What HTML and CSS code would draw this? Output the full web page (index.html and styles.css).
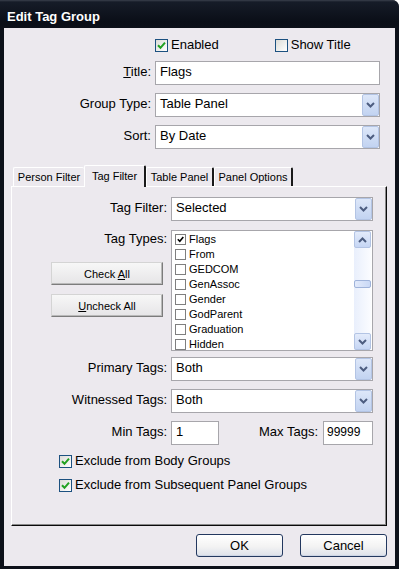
FILE: index.html
```html
<!DOCTYPE html>
<html lang="en">
<head>
    <meta charset="UTF-8">
    <title>Edit Tag Group</title>
    <link rel="stylesheet" href="styles.css">
</head>
<body>
    <div class="window">
        <div class="titlebar">Edit Tag Group</div>
        <div class="client">
            <!-- Üst form -->
            <div class="form">
                <span></span>
                <div class="checks">
                    <label class="check"><span class="box"><svg width="9" height="9" viewBox="0 0 9 9"><path d="M1 4.2l2.5 2.6L8 1.6" fill="none" stroke="#21a121" stroke-width="2"/></svg></span>Enabled</label>
                    <label class="check show-title"><span class="box"></span>Show Title</label>
                </div>
                <span class="lbl"><u>T</u>itle:</span>
                <div class="input">Flags</div>
                <span class="lbl">Group Type:</span>
                <div class="select">Table Panel<span class="drop"><svg width="9" height="6" viewBox="0 0 9 6"><path d="M1 1l3.5 3.5L8 1" fill="none" stroke="#4d5d80" stroke-width="2"/></svg></span></div>
                <span class="lbl">Sort:</span>
                <div class="select">By Date<span class="drop"><svg width="9" height="6" viewBox="0 0 9 6"><path d="M1 1l3.5 3.5L8 1" fill="none" stroke="#4d5d80" stroke-width="2"/></svg></span></div>
            </div>

            <!-- Sekmeler -->
            <div class="tabs">
                <div class="tab tab-person">Person Filter</div>
                <div class="tab tab-tag active">Tag Filter</div>
                <div class="tab tab-table">Table Panel</div>
                <div class="tab tab-options">Panel Options</div>
            </div>

            <div class="panel">
                <div class="row">
                    <span class="lbl">Tag Filter:</span>
                    <div class="select wide">Selected<span class="drop"><svg width="9" height="6" viewBox="0 0 9 6"><path d="M1 1l3.5 3.5L8 1" fill="none" stroke="#4d5d80" stroke-width="2"/></svg></span></div>
                </div>

                <div class="row types">
                    <div class="side">
                        <span class="lbl-top">Tag Types:</span>
                        <button class="btn check-all">Check <u>A</u>ll</button>
                        <button class="btn uncheck-all"><u>U</u>ncheck All</button>
                    </div>
                    <div class="list">
                        <div class="items">
                            <div class="item"><span class="lbox"><svg width="7" height="7" viewBox="0 0 7 7"><path d="M0.8 3.3l2 2L6.3 1" fill="none" stroke="#000" stroke-width="1.6"/></svg></span>Flags</div>
                            <div class="item"><span class="lbox"></span>From</div>
                            <div class="item"><span class="lbox"></span>GEDCOM</div>
                            <div class="item"><span class="lbox"></span>GenAssoc</div>
                            <div class="item"><span class="lbox"></span>Gender</div>
                            <div class="item"><span class="lbox"></span>GodParent</div>
                            <div class="item"><span class="lbox"></span>Graduation</div>
                            <div class="item"><span class="lbox"></span>Hidden</div>
                        </div>
                        <div class="scrollbar">
                            <span class="sb-btn"><svg width="9" height="6" viewBox="0 0 9 6"><path d="M1 5l3.5-3.5L8 5" fill="none" stroke="#4d5d80" stroke-width="2"/></svg></span>
                            <span class="sb-track"><span class="sb-thumb"></span></span>
                            <span class="sb-btn"><svg width="9" height="6" viewBox="0 0 9 6"><path d="M1 1l3.5 3.5L8 1" fill="none" stroke="#4d5d80" stroke-width="2"/></svg></span>
                        </div>
                    </div>
                </div>

                <div class="row after-list">
                    <span class="lbl">Primary Tags:</span>
                    <div class="select wide">Both<span class="drop"><svg width="9" height="6" viewBox="0 0 9 6"><path d="M1 1l3.5 3.5L8 1" fill="none" stroke="#4d5d80" stroke-width="2"/></svg></span></div>
                </div>
                <div class="row">
                    <span class="lbl">Witnessed Tags:</span>
                    <div class="select wide">Both<span class="drop"><svg width="9" height="6" viewBox="0 0 9 6"><path d="M1 1l3.5 3.5L8 1" fill="none" stroke="#4d5d80" stroke-width="2"/></svg></span></div>
                </div>
                <div class="row">
                    <span class="lbl">Min Tags:</span>
                    <div class="minmax">
                        <div class="input small">1</div>
                        <div class="max">
                            <span class="lbl-inline">Max Tags:</span>
                            <div class="input small max-input">99999</div>
                        </div>
                    </div>
                </div>

                <label class="check exclude"><span class="box"><svg width="9" height="9" viewBox="0 0 9 9"><path d="M1 4.2l2.5 2.6L8 1.6" fill="none" stroke="#21a121" stroke-width="2"/></svg></span>Exclude from Body Groups</label>
                <label class="check exclude"><span class="box"><svg width="9" height="9" viewBox="0 0 9 9"><path d="M1 4.2l2.5 2.6L8 1.6" fill="none" stroke="#21a121" stroke-width="2"/></svg></span>Exclude from Subsequent Panel Groups</label>
            </div>

            <div class="actions">
                <button class="dlg-btn">OK</button>
                <button class="dlg-btn">Cancel</button>
            </div>
        </div>
    </div>
</body>
</html>
```

FILE: styles.css
```css
* {
    box-sizing: border-box;
}

body {
    margin: 0;
    background: #ffffff;
    font-family: "Liberation Sans", Arial, sans-serif;
    font-size: 13px;
    color: #000;
}

/* Pencere */
.window {
    width: 399px;
    height: 569px;
    background: #0c1019;
    border-radius: 0 7px 0 0;
    display: flex;
    flex-direction: column;
}

.titlebar {
    height: 28px;
    padding: 5px 7px 0;
    line-height: 23px;
    color: #fff;
    font-weight: bold;
    font-size: 13px;
    background: linear-gradient(#3a404c, #161c28 2px, #0a0e17 22px, #0c1019);
    border-radius: 0 7px 0 0;
}

.client {
    flex: 1;
    margin: 0 4px 3px;
    background: #ece9ee;
    display: flex;
    flex-direction: column;
}

/* Üst form */
.form {
    display: grid;
    grid-template-columns: 147px 225px;
    grid-template-rows: 16px 24px 24px 24px;
    column-gap: 4px;
    row-gap: 8px;
    padding-top: 9px;
}

.lbl {
    text-align: right;
    line-height: 21px;
}

.checks {
    display: flex;
    align-items: center;
}

.check {
    display: flex;
    align-items: center;
    gap: 3px;
    line-height: 16px;
}

.show-title {
    margin-left: 56px;
}

.box {
    width: 13px;
    height: 13px;
    border: 1px solid #1c5180;
    background: linear-gradient(135deg, #dcdcd7, #ffffff);
    display: flex;
    align-items: center;
    justify-content: center;
}

.input, .select {
    height: 24px;
    border: 1px solid #a7a6ab;
    background: #fff;
    padding: 0 4px;
    line-height: 20px;
}

.select {
    position: relative;
    padding-left: 4px;
}

.drop {
    position: absolute;
    top: 0;
    right: 0;
    width: 17px;
    height: 22px;
    border: 1px solid #b3c4e4;
    border-radius: 2px;
    background: linear-gradient(#dde7f9, #c2d3f1);
    display: flex;
    align-items: center;
    justify-content: center;
}

/* Sekmeler */
.tabs {
    display: flex;
    align-items: flex-end;
    height: 21px;
    margin: 16px 0 0 9px;
    font-size: 11px;
}

.tab {
    height: 19px;
    line-height: 18px;
    text-align: center;
    border-top: 1px solid #fff;
    border-left: 1px solid #fff;
    border-right: 2px solid #1a1a1a;
    border-radius: 2px 2px 0 0;
}

.tab-person { width: 71px; border-right: none; }
.tab-tag { width: 62px; }
.tab-table { width: 68px; }
.tab-options { width: 79px; }

.tab.active {
    height: 22px;
    margin-bottom: -1px;
    line-height: 20px;
    background: #ece9ee;
    position: relative;
    z-index: 1;
}

.panel {
    height: 340px;
    margin: 0 8px 0 7px;
    padding-top: 10px;
    border: 1px solid;
    border-color: #fff #0a0a0a #0a0a0a #fff;
    box-shadow: inset -1px -1px #8a8a8a;
    display: flex;
    flex-direction: column;
    gap: 8px;
}

.row {
    display: flex;
    gap: 4px;
}

.panel .lbl {
    width: 155px;
}

.wide {
    width: 202px;
}

.types {
    margin-top: 1px;
}

.side {
    width: 155px;
    display: flex;
    flex-direction: column;
    align-items: flex-end;
}

.lbl-top {
    line-height: 16px;
    margin-top: 1px;
}

.btn {
    width: 112px;
    height: 23px;
    margin-right: 4px;
    font-family: inherit;
    font-size: 11px;
    color: #000;
    background: linear-gradient(#f7f7f7, #e6e5e7);
    border: 1px solid;
    border-color: #d4d4d4 #7c7c7c #7c7c7c #d4d4d4;
    box-shadow: inset -1px -1px #b9b9b9;
    padding: 0;
}

.check-all { margin-top: 15px; }
.uncheck-all { margin-top: 9px; }

.list {
    width: 202px;
    height: 121px;
    border: 1px solid #a7a6ab;
    background: #fff;
    display: flex;
    overflow: hidden;
}

.items {
    flex: 1;
    padding: 1px 0 0 3px;
    font-size: 11px;
}

.item {
    height: 15px;
    line-height: 15px;
    display: flex;
    align-items: center;
    gap: 3px;
}

.lbox {
    width: 11px;
    height: 11px;
    border: 1px solid #7f7f7f;
    background: #fff;
    display: flex;
    align-items: center;
    justify-content: center;
}

.scrollbar {
    width: 17px;
    display: flex;
    flex-direction: column;
    background: linear-gradient(to right, #e9effc, #fbfcff);
    margin-right: 1px;
}

.sb-btn {
    height: 17px;
    border: 1px solid #b3c4e4;
    border-radius: 2px;
    background: linear-gradient(#e3ebfb, #c6d6f4);
    display: flex;
    align-items: center;
    justify-content: center;
}

.sb-track {
    flex: 1;
}

.sb-thumb {
    display: block;
    height: 8px;
    margin-top: 32px;
    border: 1px solid #9fb3da;
    border-radius: 2px;
    background: linear-gradient(to right, #e2eafb, #c9d8f5);
}

.after-list {
    margin-top: -2px;
}

.minmax {
    width: 202px;
    display: flex;
    justify-content: space-between;
}

.small {
    width: 48px;
}

.max {
    display: flex;
    gap: 5px;
}

.lbl-inline {
    line-height: 21px;
}

.max-input {
    width: 50px;
    font-size: 12px;
    padding-left: 3px;
}

.exclude {
    margin-left: 47px;
}

/* Alt butonlar */
.actions {
    display: flex;
    justify-content: flex-end;
    gap: 17px;
    margin: 8px 8px 0 0;
}

.dlg-btn {
    width: 87px;
    height: 23px;
    font-family: inherit;
    font-size: 13px;
    color: #000;
    border: 1px solid #23385f;
    border-radius: 3px;
    background: linear-gradient(#ffffff, #f3f3f3 55%, #dde1ea);
    box-shadow: inset 0 -1px #cdd5e4;
    padding: 0;
}
```
